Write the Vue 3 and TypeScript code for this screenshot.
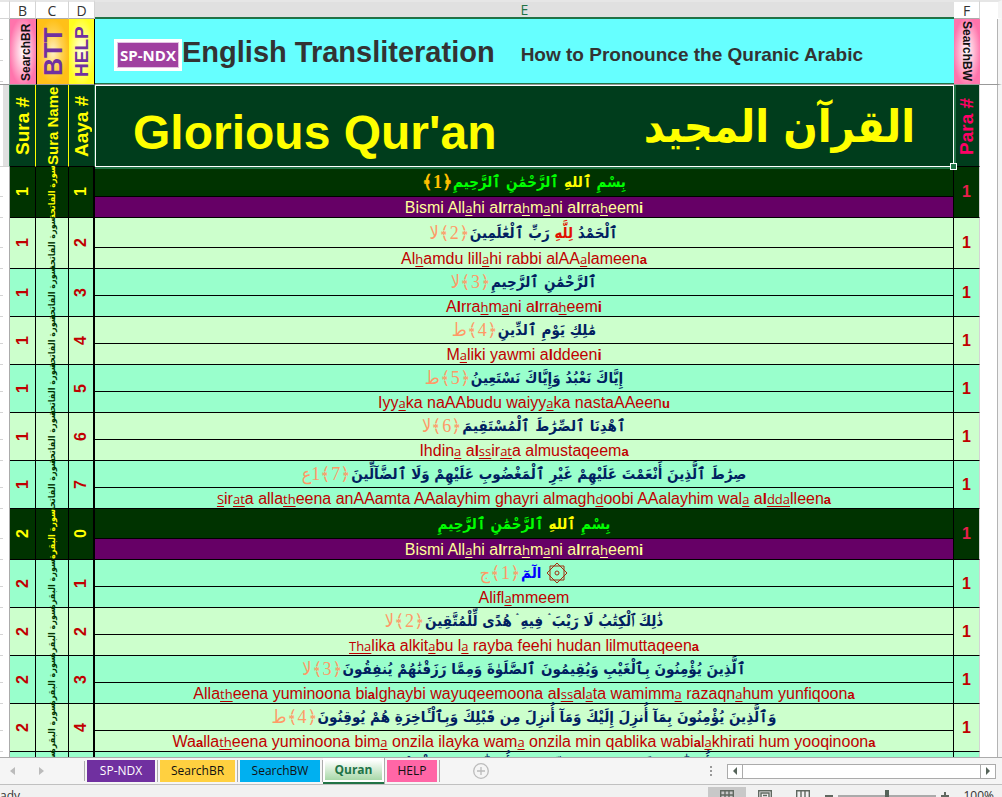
<script setup lang="ts">
interface Segment {
  text: string
  kind: string
}

interface Verse {
  sura: number
  aaya: number
  name: string
  arabic: Segment[]
  mark: string
  latin: Segment[]
  tone: string
  tall: boolean
}

const FATIHA = 'سورة الفاتحة'
const BAQARA = 'سورة البقرة'

// "_x_" is underlined, "*x*" is bold
function parseLatin(source: string): Segment[] {
  return source
    .split(/(_[^_]+_|\*[^*]+\*)/)
    .filter((part) => part.length > 0)
    .map((part) => {
      if (part.startsWith('_')) return { text: part.slice(1, -1), kind: 'under' }
      if (part.startsWith('*')) {
        const text = part.slice(1, -1)
        return { text, kind: /[li]/.test(text) ? 'strong stem' : 'strong' }
      }
      return { text: part, kind: 'plain' }
    })
}

// "[x]" is a highlighted word
function parseArabic(source: string): Segment[] {
  return source
    .split(/(\[[^\]]+\])/)
    .filter((part) => part.length > 0)
    .map((part) =>
      part.startsWith('[') ? { text: part.slice(1, -1), kind: 'divine' } : { text: part, kind: 'plain' },
    )
}

function verse(
  sura: number,
  aaya: number,
  tone: string,
  arabic: string,
  mark: string,
  latin: string,
  tall = false,
): Verse {
  return {
    sura,
    aaya,
    tone,
    mark,
    tall,
    name: sura === 1 ? FATIHA : BAQARA,
    arabic: parseArabic(arabic),
    latin: parseLatin(latin),
  }
}

const BISMI_AR = 'بِسْمِ [ٱللهِ] ٱلرَّحْمَٰنِ ٱلرَّحِيمِ'
const BISMI_EN = 'Bismi All_a_hi a*l*rra_h_m_a_ni a*l*rra_h_eem*i*'

const verses: Verse[] = [
  verse(1, 1, 'dark', BISMI_AR, '﴿1﴾', BISMI_EN, true),
  verse(1, 2, 'lime', 'ٱلْحَمْدُ [لِلَّهِ] رَبِّ ٱلْعَٰلَمِينَ', '﴿2﴾لا', 'Al_h_amdu lill_a_hi rabbi alAA_a_lameen*a*', true),
  verse(1, 3, 'mint', 'ٱلرَّحْمَٰنِ ٱلرَّحِيمِ', '﴿3﴾لا', 'A*l*rra_h_m_a_ni a*l*rra_h_eem*i*'),
  verse(1, 4, 'lime', 'مَٰلِكِ يَوْمِ ٱلدِّينِ', '﴿4﴾ط', 'M_a_liki yawmi a*l*ddeen*i*'),
  verse(1, 5, 'mint', 'إِيَّاكَ نَعْبُدُ وَإِيَّاكَ نَسْتَعِينُ', '﴿5﴾ط', 'Iyy_a_ka naAAbudu waiyy_a_ka nastaAAeen*u*'),
  verse(1, 6, 'lime', 'ٱهْدِنَا ٱلصِّرَٰطَ ٱلْمُسْتَقِيمَ', '﴿6﴾لا', 'Ihdin_a_ a*l*_ss_ir_at_a almustaqeem*a*'),
  verse(
    1,
    7,
    'mint',
    'صِرَٰطَ ٱلَّذِينَ أَنْعَمْتَ عَلَيْهِمْ غَيْرِ ٱلْمَغْضُوبِ عَلَيْهِمْ وَلَا ٱلضَّآلِّينَ',
    '﴿7﴾1ع',
    '_S_ir_at_a alla_th_eena anAAamta AAalayhim ghayri almagh_d_oobi AAalayhim wal_a_ a*l*_dda_lleen*a*',
  ),
  verse(2, 0, 'dark', BISMI_AR, '', BISMI_EN, true),
  verse(2, 1, 'mint', 'الٓمٓ', '﴿1﴾ج', 'Alifl_a_mmeem'),
  verse(
    2,
    2,
    'lime',
    'ذَٰلِكَ ٱلْكِتَٰبُ لَا رَيْبَ ۛ فِيهِ ۛ هُدًى لِّلْمُتَّقِينَ',
    '﴿2﴾لا',
    '_Tha_lika alkit_a_bu l_a_ rayba feehi hudan lilmuttaqeen*a*',
  ),
  verse(
    2,
    3,
    'mint',
    'ٱلَّذِينَ يُؤْمِنُونَ بِٱلْغَيْبِ وَيُقِيمُونَ ٱلصَّلَوٰةَ وَمِمَّا رَزَقْنَٰهُمْ يُنفِقُونَ',
    '﴿3﴾لا',
    'Alla_th_eena yuminoona bi*a*lghaybi wayuqeemoona a*l*_ss_al_a_ta wamimm_a_ razaqn_a_hum yunfiqoon*a*',
  ),
  verse(
    2,
    4,
    'lime',
    'وَٱلَّذِينَ يُؤْمِنُونَ بِمَآ أُنزِلَ إِلَيْكَ وَمَآ أُنزِلَ مِن قَبْلِكَ وَبِٱلْـَٔاخِرَةِ هُمْ يُوقِنُونَ',
    '﴿4﴾ط',
    'Wa*a*lla_th_eena yuminoona bim_a_ onzila ilayka wam_a_ onzila min qablika wabi*a*l_a_khirati hum yooqinoon*a*',
  ),
  verse(
    2,
    5,
    'mint',
    'أُو۟لَٰٓئِكَ عَلَىٰ هُدًى مِّن رَّبِّهِمْ ۖ وَأُو۟لَٰٓئِكَ هُمُ ٱلْمُفْلِحُونَ',
    '﴿5﴾',
    'Ol_a_ika AAal_a_ hudan min rabbihim waol_a_ika humu almufli_h_oon*a*',
  ),
]

const tabs = [
  { label: 'SP-NDX', look: 'violet' },
  { label: 'SearchBR', look: 'amber' },
  { label: 'SearchBW', look: 'azure' },
  { label: 'Quran', look: 'active' },
  { label: 'HELP', look: 'rose' },
]
</script>

<template>
  <div class="app">
    <main class="sheet">
      <table class="grid">
        <colgroup>
          <col class="w-gutter" />
          <col class="w-b" />
          <col class="w-c" />
          <col class="w-d" />
          <col />
          <col class="w-f" />
          <col class="w-rest" />
        </colgroup>
        <thead>
          <tr class="letters">
            <th class="corner"></th>
            <th>B</th>
            <th>C</th>
            <th>D</th>
            <th class="selected">E</th>
            <th>F</th>
            <th class="rest"></th>
          </tr>
        </thead>
        <tbody>
          <tr class="links">
            <td class="gutter ticks"></td>
            <td class="pink"><div class="up tag">SearchBR</div></td>
            <td class="orange"><div class="up btt">BTT</div></td>
            <td class="yellow"><div class="up help">HELP</div></td>
            <td class="banner">
              <div class="banner-row">
                <button type="button" class="badge"><span>SP-NDX</span></button>
                <span class="title">English Transliteration</span>
                <span class="subtitle">How to Pronounce the Quranic Arabic</span>
              </div>
            </td>
            <td class="pink"><div class="down tag">SearchBW</div></td>
            <td class="rest"></td>
          </tr>
          <tr class="heads">
            <td class="gutter on"></td>
            <td><div class="up head">Sura #</div></td>
            <td><div class="up head small">Sura Name</div></td>
            <td><div class="up head">Aaya #</div></td>
            <td class="hero">
              <div class="hero-row">
                <span class="hero-en">Glorious Qur'an</span>
                <span class="hero-ar" dir="rtl" lang="ar">القرآن المجيد</span>
              </div>
              <i class="handle"></i>
            </td>
            <td><div class="up head para">Para #</div></td>
            <td class="rest"></td>
          </tr>
          <template v-for="(v, i) in verses" :key="i">
            <tr :class="[v.tone, 'first', { tall: v.tall }]">
              <td class="gutter"></td>
              <td rowspan="2" class="key"><div class="up num">{{ v.sura }}</div></td>
              <td rowspan="2" class="key"><div class="up name" lang="ar">{{ v.name }}</div></td>
              <td rowspan="2" class="key thick"><div class="up num">{{ v.aaya }}</div></td>
              <td class="ar">
                <div class="line" dir="rtl" lang="ar">
                  <svg v-if="v.sura === 2 && v.aaya === 1" class="star" viewBox="0 0 22 22">
                    <path d="M4 4h14v14H4zM11 1l10 10-10 10L1 11z" />
                    <circle cx="11" cy="11" r="2" />
                  </svg>
                  <span :class="{ muqattaat: v.sura === 2 && v.aaya === 1 }"
                    ><span v-for="(s, k) in v.arabic" :key="k" :class="s.kind">{{ s.text }}</span></span
                  ><span class="mark">{{ v.mark }}</span>
                </div>
              </td>
              <td rowspan="2" class="para-no">1</td>
              <td rowspan="2" class="rest"></td>
            </tr>
            <tr :class="[v.tone, 'second']">
              <td class="gutter"></td>
              <td class="en">
                <div class="line"
                  ><span v-for="(s, k) in v.latin" :key="k" :class="s.kind">{{ s.text }}</span></div
                >
              </td>
            </tr>
          </template>
        </tbody>
      </table>
    </main>

    <nav class="tabbar">
      <div class="arrows">
        <button type="button" aria-label="Previous sheet">
          <svg viewBox="0 0 6 8"><path d="M5 0v8L0 4z" /></svg>
        </button>
        <button type="button" aria-label="Next sheet">
          <svg viewBox="0 0 6 8"><path d="M1 0v8l5-4z" /></svg>
        </button>
      </div>
      <div class="tabs">
        <div v-for="t in tabs" :key="t.label" :class="['slot', { open: t.look === 'active' }]">
          <button type="button" :class="['tab', t.look]">
            <span>{{ t.label }}</span>
          </button>
        </div>
      </div>
      <button type="button" class="add" aria-label="New sheet">
        <svg viewBox="0 0 16 16">
          <circle cx="8" cy="8" r="7.3" />
          <path d="M8 4v8M4 8h8" />
        </svg>
      </button>
      <div class="grip"><i></i><i></i><i></i></div>
      <div class="scroll">
        <button type="button" aria-label="Scroll left">
          <svg viewBox="0 0 6 8"><path d="M5 0v8L1 4z" /></svg>
        </button>
        <div class="thumb"></div>
        <button type="button" aria-label="Scroll right">
          <svg viewBox="0 0 6 8"><path d="M1 0v8l4-4z" /></svg>
        </button>
      </div>
    </nav>

    <footer class="status">
      <span class="ready">ady</span>
      <div class="views">
        <button type="button" class="view on" aria-label="Normal">
          <svg viewBox="0 0 14 14"><path d="M.7.7h12.6v12.6H.7zM.7 5h12.6M.7 9h12.6M5 .7v12.6M9 .7v12.6" /></svg>
        </button>
        <button type="button" class="view" aria-label="Page layout">
          <svg viewBox="0 0 14 14"><path d="M.7.7h12.6v12.6H.7zM3 3h8v9H3zM5 5.500h4M5 8h4" /></svg>
        </button>
        <button type="button" class="view" aria-label="Page break">
          <svg viewBox="0 0 14 14"><path d="M.7.7h12.6v12.6H.7zM5 .7v8h4v-8" /></svg>
        </button>
      </div>
      <div class="zoom">
        <button type="button" aria-label="Zoom out"><i class="bar"></i></button>
        <input type="range" min="0" max="100" value="50" aria-label="Zoom" />
        <button type="button" aria-label="Zoom in"><i class="bar"></i><i class="bar upright"></i></button>
        <span class="percent">100%</span>
      </div>
    </footer>
  </div>
</template>

<style>
body {
  background: #fff;
  overflow: hidden;
}
</style>

<style scoped>
.app {
  display: flex;
  flex-direction: column;
  height: 100vh;
  overflow: hidden;
  font-family: 'Liberation Sans', Arial, sans-serif;
}

button {
  border: 0;
  padding: 0;
  margin: 0;
  background: none;
  font: inherit;
  color: inherit;
}

.sheet {
  flex: 1;
  min-height: 0;
  overflow: hidden;
}

.grid {
  width: 100%;
  table-layout: fixed;
  border-collapse: separate;
  border-spacing: 0;
}

.w-gutter { width: 10px; }
.w-b { width: 26px; }
.w-c { width: 33px; }
.w-d { width: 26px; }
.w-f { width: 26px; }
.w-rest { width: 22px; }

th,
td {
  box-sizing: border-box;
  padding: 0;
}

.letters th {
  height: 19px;
  border-top: 2px solid #e6e6e6;
  border-right: 1px solid #d4d4d4;
  border-bottom: 1px solid #ababab;
  font: 14px/15px 'Open Sans', sans-serif;
  color: #333;
}

.letters .selected {
  background: #e0e0e0;
  border-bottom: 2px solid #217346;
  border-right: 0;
  color: #217346;
}

.letters .corner {
  border-bottom-color: #d4d4d4;
}

.rest {
  border-right: 4px solid #f5f5f5;
  box-shadow: inset -1px 0 #b4b4b4;
}

.letters .rest {
  border-right: 4px solid #f5f5f5;
  border-bottom-color: #fff;
  box-shadow: none;
}

.gutter {
  border-right: 1px solid #ababab;
  background: linear-gradient(#d4d4d4, #d4d4d4) 0 100% / 3px 1px no-repeat;
}

.gutter.ticks {
  background: repeating-linear-gradient(#fff 0 20px, #d4d4d4 20px 21px) 0 0 / 3px 100% no-repeat;
}

.up,
.down {
  display: flex;
  align-items: center;
  justify-content: center;
  writing-mode: vertical-rl;
  white-space: nowrap;
  width: 100%;
  box-sizing: border-box;
}

.up {
  transform: rotate(180deg);
}

.links td {
  height: 66px;
  border-bottom: 1px solid #999;
}

.links .up,
.links .down {
  height: 64px;
}

.links .pink {
  background: radial-gradient(ellipse at center, #fff 0, #ffb8d2 40%, #ff74ac 75%);
}

.links .orange {
  background: radial-gradient(ellipse at center, #fff2c8 0, #ffd050 40%, #ffc018 70%);
  border-left: 1px solid #000;
}

.links .yellow {
  background: radial-gradient(ellipse at center, #fffff0 0, #ffff80 40%, #ffff20 75%);
  border-right: 1px solid #000;
}

.tag {
  font-size: 12px;
  font-weight: bold;
  color: #111;
}

.up.tag {
  padding-right: 5px;
}

.btt {
  font-size: 25px;
  font-weight: bold;
  color: #7030a0;
}

.help {
  font-size: 19px;
  font-weight: bold;
  color: #7030a0;
}

.links .banner {
  background: #66ffff;
  box-shadow: inset 0 -1px #217346;
}

.banner-row {
  display: flex;
  align-items: center;
  padding-left: 19px;
  white-space: nowrap;
  color: #333;
  font-weight: bold;
}

.badge {
  display: flex;
  flex: none;
  width: 68px;
  height: 32px;
  padding: 3px;
  box-sizing: border-box;
  background: #fff;
  margin-top: 6px;
}

.badge span {
  flex: 1;
  background: #a040a0;
  border: 1px solid #e3c3e3;
  color: #fff;
  font: bold 15px/24px 'Open Sans', sans-serif;
}

.title {
  font-size: 29px;
  line-height: 36px;
}

.subtitle {
  margin-left: 26px;
  padding-top: 7px;
  font-size: 19px;
  line-height: 24px;
}

.heads td {
  height: 82px;
  background: #003d1c;
  border-right: 1px solid #ffff00;
  border-bottom: 1px solid #000;
}

.heads td.gutter {
  background: linear-gradient(#e0e0e0, #e0e0e0) 3px 0 / 7px 100% no-repeat;
  border-right: 1px solid #217346;
  border-bottom-color: #d4d4d4;
}

.heads td:nth-child(4) {
  border-right-color: #217346;
}

.heads td:nth-child(6) {
  border-right-color: #d4d4d4;
}

.heads td.rest {
  background: #fff;
  border-right: 4px solid #f5f5f5;
  border-bottom: 0;
}

.head {
  height: 78px;
  color: #ffff00;
  font-size: 19px;
  font-weight: bold;
}

.head.small {
  font-size: 15px;
}

.head.para {
  color: #ff0066;
}

.heads td.hero {
  position: relative;
  border: 1px solid #fff;
  box-shadow: 0 2px #217346, 2px 0 #217346;
}

.hero-row {
  display: flex;
  align-items: center;
  justify-content: space-between;
  padding: 12px 38px 0 37px;
  height: 68px;
  white-space: nowrap;
  color: #ffff00;
  font-weight: bold;
}

.hero-en {
  font-size: 48px;
}

.hero-ar {
  padding-bottom: 12px;
  font-family: 'DejaVu Sans Condensed', 'DejaVu Sans', sans-serif;
  font-size: 45px;
}

.handle {
  position: absolute;
  right: -4px;
  bottom: -4px;
  width: 5px;
  height: 5px;
  background: #217346;
  border: 1px solid #fff;
  z-index: 1;
}

.first .gutter,
.first .ar {
  height: 27px;
}

.tall .gutter,
.tall .ar {
  height: 30px;
}

.second .gutter,
.second .en {
  height: 21px;
}

.key,
.ar,
.en,
.para-no {
  border-right: 1px solid #000;
  border-bottom: 1px solid #000;
}

.thick {
  border-right-width: 2px;
}

.para-no {
  border-right-color: #d4d4d4;
  text-align: center;
  font-size: 16px;
  font-weight: bold;
  color: #c00000;
}

.lime td:not(.gutter, .rest) { background: #ccffcc; }
.mint td:not(.gutter, .rest) { background: #99ffcc; }
.dark td:not(.gutter, .rest) { background: #003300; }
.dark.second td.en { background: #660066; }

.key .up {
  height: 46px;
}

.num {
  font-size: 16px;
  font-weight: bold;
  color: #c00000;
}

.name {
  font-family: 'DejaVu Sans Condensed', 'DejaVu Sans', sans-serif;
  font-size: 9px;
  font-weight: bold;
  color: #003300;
}

.dark .num,
.dark .name {
  color: #ffff00;
}

.dark .para-no {
  color: #e8204c;
}

.ar .line {
  display: flex;
  align-items: center;
  justify-content: center;
  height: 26px;
  white-space: nowrap;
  font-family: 'DejaVu Sans Condensed', 'DejaVu Sans', sans-serif;
  font-size: 15px;
  font-weight: bold;
  color: #002060;
}

.dark .ar .line {
  color: #00ff00;
}

.divine {
  color: #e01000;
}

.dark .divine {
  color: #ffff00;
}

.muqattaat {
  color: #0000ff;
}

.mark {
  font-family: 'Liberation Serif', 'DejaVu Sans Condensed', 'DejaVu Sans', serif;
  font-size: 18px;
  font-weight: normal;
  color: #ff9966;
}

.dark .mark {
  font-weight: bold;
  color: #ffc000;
}

.star {
  width: 22px;
  height: 22px;
  margin-left: 5px;
  fill: none;
  stroke: #a03010;
}

.en .line {
  height: 20px;
  line-height: 22px;
  text-align: center;
  white-space: nowrap;
  font-size: 16px;
  color: #c00000;
}

.dark .en .line {
  color: #ffff99;
}

.under {
  font-family: 'Open Sans', sans-serif;
  font-size: 13px;
  line-height: 16px;
  text-decoration: underline;
  text-underline-offset: 2px;
}

.strong {
  font-size: 13px;
  font-weight: bold;
}

.strong.stem {
  font-size: 15px;
}

.tabbar {
  display: flex;
  align-items: center;
  height: 28px;
  background: #f5f5f5;
  border-top: 1px solid #ababab;
  border-bottom: 1px solid #c0c0c0;
  box-sizing: border-box;
  flex: none;
}

.arrows {
  display: flex;
  gap: 22px;
  width: 85px;
  padding-left: 10px;
  box-sizing: border-box;
  border-right: 1px solid #ababab;
  height: 20px;
  align-items: center;
}

.arrows svg {
  display: block;
  width: 6px;
  height: 8px;
  fill: #bbb;
}

.tabs {
  display: flex;
  align-items: center;
}

.slot {
  padding: 0 2px;
  border-right: 1px solid #ababab;
}

.slot.open {
  padding: 0;
}

.tab {
  display: block;
  height: 22px;
  width: 75px;
  color: #111;
  font: 12px/22px 'Open Sans', sans-serif;
}

.violet { width: 68px; background: #7030a0; color: #fff; }
.amber { background: #ffd040; }
.azure { width: 80px; background: #00b0f0; }
.rose { width: 50px; background: #ff66a6; }

.active {
  display: flex;
  width: 61px;
  height: 26px;
  padding: 2px;
  box-sizing: border-box;
  background: #fff;
  border-bottom: 2px solid #217346;
  color: #217346;
  font-weight: bold;
}

.active span {
  flex: 1;
  line-height: 20px;
  background: linear-gradient(#fff, #a8d8a8);
}

.add {
  margin-left: 33px;
}

.add svg {
  display: block;
  width: 16px;
  height: 16px;
  fill: none;
  stroke: #bbb;
  stroke-width: 1.300;
}

.grip {
  display: flex;
  flex-direction: column;
  gap: 2px;
  margin-left: auto;
  margin-right: 15px;
}

.grip i {
  width: 2px;
  height: 2px;
  background: #999;
}

.scroll {
  display: flex;
  width: 269px;
  height: 15px;
  margin-right: 6px;
  background: #fff;
  border: 1px solid #ababab;
  box-sizing: border-box;
}

.scroll button {
  width: 14px;
}

.scroll svg {
  display: block;
  margin: auto;
  width: 6px;
  height: 8px;
  fill: #56645a;
}

.thumb {
  flex: 1;
  border: solid #ababab;
  border-width: 0 1px;
}

.status {
  display: flex;
  align-items: flex-start;
  flex: none;
  height: 12px;
  overflow: hidden;
  background: #f1f1f1;
  font: 12px/22px 'Open Sans', sans-serif;
  color: #333;
}

.views {
  display: flex;
  margin-left: auto;
  padding-top: 2px;
}

.view {
  width: 38px;
  height: 20px;
}

.view.on {
  background: #c8c8c8;
}

.view svg {
  display: block;
  width: 14px;
  height: 14px;
  margin: auto;
  fill: none;
  stroke: #606860;
  stroke-width: 1.400;
}

.zoom {
  display: flex;
  align-items: center;
  height: 22px;
  padding-right: 8px;
}

.zoom button {
  display: grid;
  place-items: center;
  width: 14px;
  height: 22px;
}

.bar {
  grid-area: 1 / 1;
  width: 8px;
  height: 2px;
  background: #606860;
}

.bar.upright {
  width: 2px;
  height: 8px;
}

.zoom input {
  appearance: none;
  width: 98px;
  height: 2px;
  margin: 0 2px;
  background: #aaa;
}

.zoom input::-webkit-slider-thumb {
  appearance: none;
  width: 4px;
  height: 12px;
  background: #56645a;
}

.percent {
  margin-left: 11px;
}
</style>
